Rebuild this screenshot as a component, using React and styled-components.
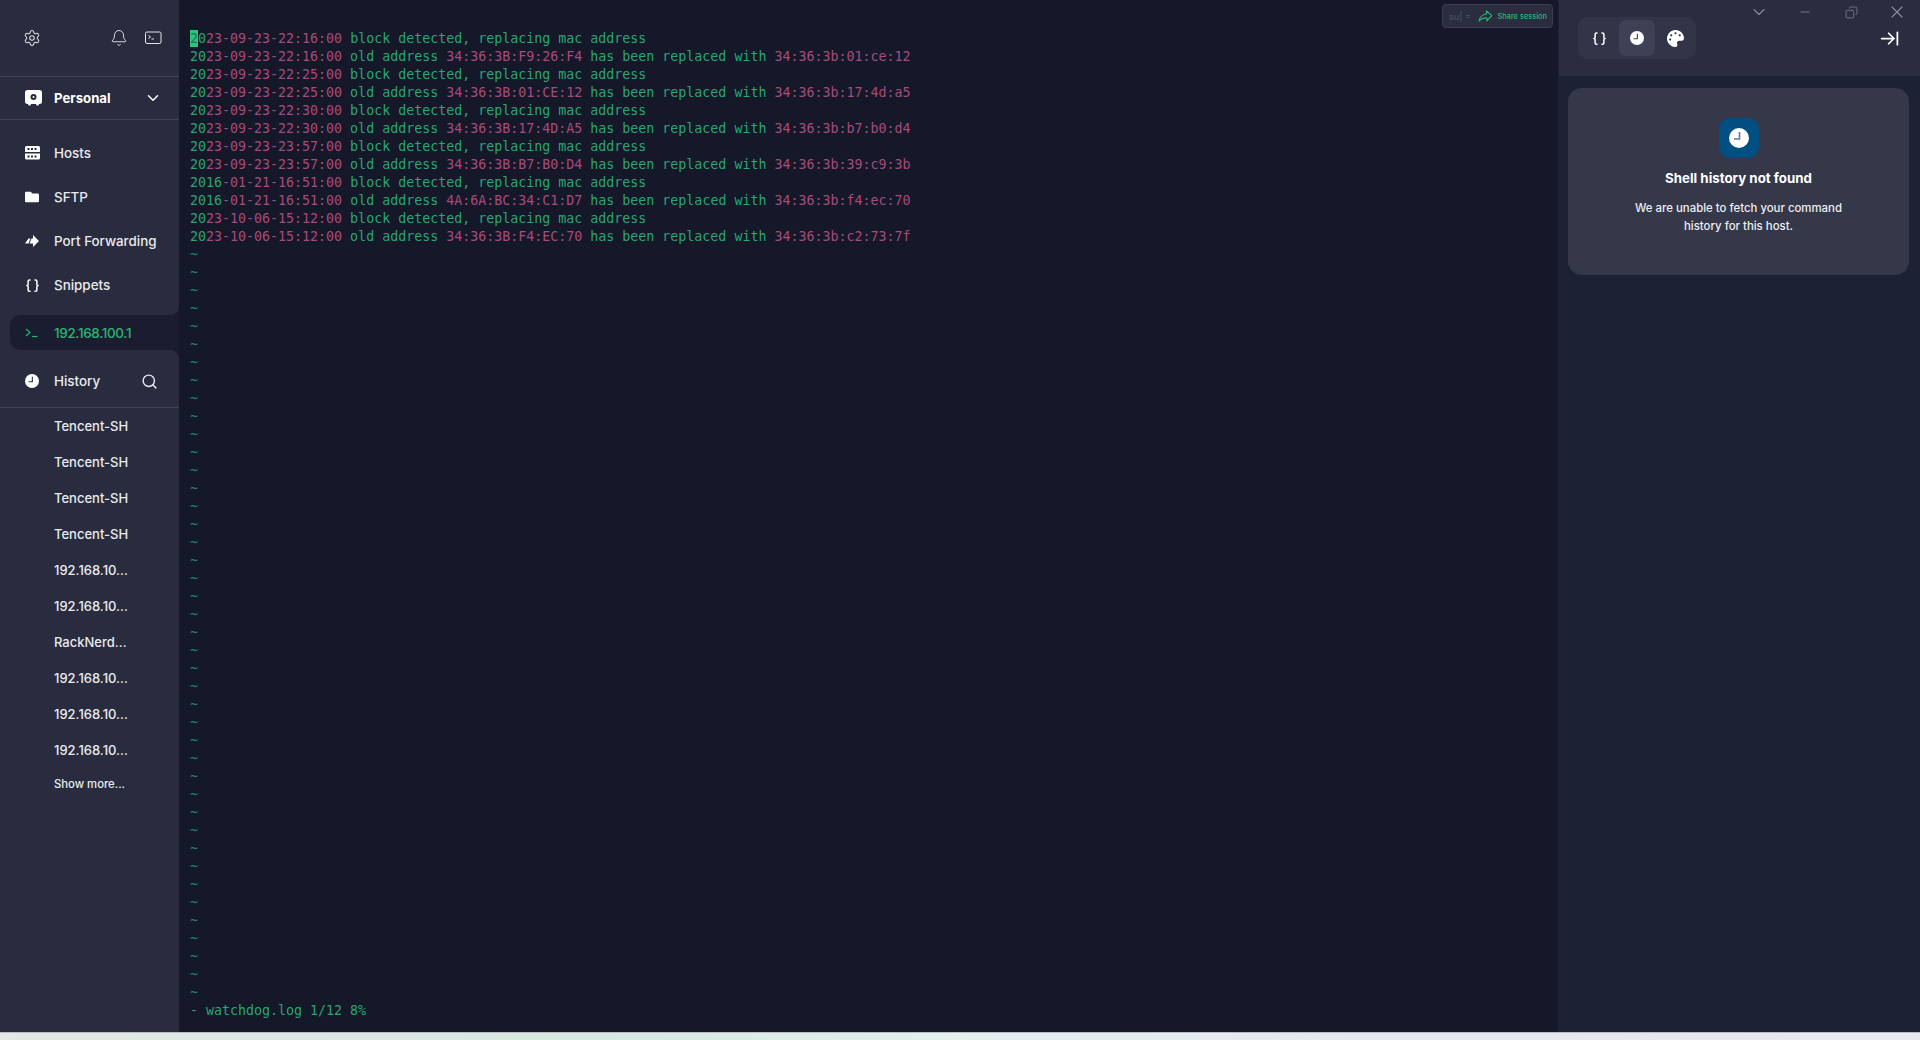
import React from 'react';
import styled, { createGlobalStyle } from 'styled-components';
import { Settings, Bell, ChevronDown, Search, Braces, Minus, X, Copy, ArrowRightToLine } from 'lucide-react';
import { FaFolder, FaPalette } from 'react-icons/fa';

const GlobalStyle = createGlobalStyle`
  html, body {
    margin: 0;
    padding: 0;
    height: 100%;
    background: #141828;
    overflow: hidden;
  }
  * { box-sizing: border-box; }
`;

const Page = styled.div`
  width: 1920px;
  height: 1040px;
  display: flex;
  flex-direction: column;
  font-family: Inter, "Liberation Sans", sans-serif;
`;

const Win = styled.div`
  flex: 1;
  min-height: 0;
  display: flex;
  position: relative;
`;

const DesktopStrip = styled.div`
  height: 8px;
  border-top: 1px solid #b9bcc2;
  background: linear-gradient(90deg, #e4e8e6 0%, #d6e8df 30%, #e3f0ee 50%, #e6e6ef 75%, #e9e9f2 100%);
`;

// Sidebar
const Sidebar = styled.aside`
  width: 179px;
  flex-shrink: 0;
  background: #292c3e;
  display: flex;
  flex-direction: column;
  color: #e9eaef;
`;

const TopBar = styled.div`
  height: 77px;
  padding: 0 17px 0 23px;
  display: flex;
  align-items: center;
  justify-content: space-between;
  border-bottom: 1px solid #3f4254;
  color: #d9dae1;
`;

const TopGroup = styled.div`
  display: flex;
  align-items: center;
  gap: 17px;
`;

const VaultRow = styled.div`
  height: 43px;
  padding: 0 17px 0 25px;
  display: flex;
  align-items: center;
  border-bottom: 1px solid #3f4254;
  font-size: 13.2px;
  font-weight: 700;
  color: #fff;
`;

const RowIcon = styled.span`
  width: 29px;
  flex-shrink: 0;
  display: flex;
  align-items: center;
`;

const VaultName = styled.span`
  flex: 1;
`;

const Nav = styled.nav`
  padding-top: 11px;
  display: flex;
  flex-direction: column;
`;

const NavItem = styled.div`
  height: 44px;
  padding-left: 25px;
  display: flex;
  align-items: center;
  font-size: 13.4px;
  font-weight: 500;
`;

const ActiveTab = styled.div`
  position: relative;
  height: 35px;
  margin: 8px 0 0 10px;
  padding-left: 15px;
  display: flex;
  align-items: center;
  background: #1a1d30;
  border-radius: 10px 0 0 10px;
  color: #2bb673;
  font-size: 13.4px;
  font-weight: 500;
  letter-spacing: -0.3px;

  &::before, &::after {
    content: '';
    position: absolute;
    right: 0;
    width: 9px;
    height: 9px;
  }
  &::before {
    top: -9px;
    background: radial-gradient(circle at 0 0, transparent 8.5px, #1a1d30 9px);
  }
  &::after {
    bottom: -9px;
    background: radial-gradient(circle at 0 100%, transparent 8.5px, #1a1d30 9px);
  }
`;

const HistoryHead = styled.div`
  height: 58px;
  padding: 5px 21px 0 25px;
  display: flex;
  align-items: center;
  border-bottom: 1px solid #3f4254;
  font-size: 13.4px;
  font-weight: 500;
`;

const HistoryTitle = styled.span`
  flex: 1;
`;

const HistoryList = styled.div`
  display: flex;
  flex-direction: column;
`;

const HistoryItem = styled.div`
  height: 36px;
  padding-left: 54px;
  display: flex;
  align-items: center;
  font-size: 13px;
  font-weight: 500;
`;

const ShowMore = styled.div`
  height: 32px;
  padding-left: 54px;
  display: flex;
  align-items: center;
  font-size: 11.3px;
  font-weight: 500;
`;

// Terminal
const Terminal = styled.main`
  flex: 1;
  min-width: 0;
  position: relative;
  background: #141828;
  padding: 30px 0 0 11px;
  font-family: "DejaVu Sans Mono", "Liberation Mono", monospace;
  font-size: 13.3px;
  line-height: 18px;
  color: #2aa574;
  white-space: pre;
`;

const Line = styled.div`
  height: 18px;
`;

const Pink = styled.span`
  color: #a84a7e;
`;

const Cursor = styled.span`
  display: inline-block;
  height: 17px;
  line-height: 17px;
  vertical-align: top;
  background: #2bc47d;
  color: #157a50;
`;

const Tilde = styled.div`
  height: 18px;
  color: #1f8277;
`;

const ShareBox = styled.div`
  position: absolute;
  top: 4px;
  right: 5px;
  width: 111px;
  height: 24px;
  padding: 1px 5px 0 6px;
  display: flex;
  align-items: center;
  background: #2a2d3f;
  border: 1px solid #3a3d4e;
  border-radius: 4px;
  font-family: Inter, "Liberation Sans", sans-serif;
  font-size: 7.4px;
  font-weight: 500;
  color: #2bb673;
`;

const ShareGhost = styled.span`
  color: #4b4e5f;
  font-size: 9px;
  width: 29px;
`;

const ShareLabel = styled.span`
  margin-left: 5px;
`;

// Right panel
const Panel = styled.section`
  width: 362px;
  flex-shrink: 0;
  display: flex;
  flex-direction: column;
  background: #1d2134;
  border-left: 1px solid #1f2233;
`;

const PanelHead = styled.div`
  height: 76px;
  padding: 0 20px 0 19px;
  display: flex;
  align-items: center;
  justify-content: space-between;
  background: #2a2d3f;
  color: #fff;
`;

const Tabs = styled.div`
  width: 118px;
  height: 42px;
  padding: 3px;
  display: flex;
  justify-content: space-between;
  background: #323547;
  border-radius: 10px;
`;

const Tab = styled.div`
  width: 36px;
  height: 36px;
  display: flex;
  align-items: center;
  justify-content: center;
  border-radius: 7px;
  background: ${({ $active }) => ($active ? '#3e4155' : 'transparent')};
`;

const Card = styled.div`
  margin: 12px 11px 0 9px;
  height: 187px;
  padding-top: 30px;
  display: flex;
  flex-direction: column;
  align-items: center;
  background: #353849;
  border-radius: 14px;
  color: #fff;
`;

const CardIcon = styled.div`
  width: 40px;
  height: 40px;
  display: flex;
  align-items: center;
  justify-content: center;
  background: #004e82;
  border-radius: 11px;
`;

const CardTitle = styled.h3`
  margin: 11px 0 0;
  font-size: 13.3px;
  line-height: 18px;
  font-weight: 700;
`;

const CardText = styled.p`
  margin: 12px 0 0;
  width: 230px;
  text-align: center;
  font-size: 11.4px;
  line-height: 18px;
  font-weight: 500;
  color: #eeeef2;
`;

const WinControls = styled.div`
  position: absolute;
  top: 0;
  right: 0;
  display: flex;
  color: #8a8d9e;
`;

const WinButton = styled.div`
  width: 46px;
  height: 24px;
  display: flex;
  align-items: center;
  justify-content: center;
`;

const ServerIcon = () => (
  <svg width="15" height="14" viewBox="0 0 15 14">
    <path fill="#fff" fillRule="evenodd" d="M1.5 0h12A1.5 1.5 0 0 1 15 1.5V6H0V1.5A1.5 1.5 0 0 1 1.5 0zM0 7.5h15V12a1.5 1.5 0 0 1-1.5 1.5h-12A1.5 1.5 0 0 1 0 12zM2.5 2v2h2V2zm3.5 0v2h2V2zm3.5 0v2h2V2zM2.5 9.5v2h2v-2zm3.5 0v2h2v-2zm3.5 0v2h2v-2z" />
  </svg>
);

const VaultIcon = () => (
  <svg width="17" height="16" viewBox="0 0 17 16">
    <path fill="#fff" d="M2.5 0h12A2.5 2.5 0 0 1 17 2.5v9a2.5 2.5 0 0 1-2.5 2.5H14l-.5 1.5h-2L11 14H6l-.5 1.5h-2L3 14h-.5A2.5 2.5 0 0 1 0 11.500v-9A2.500 2.500 0 0 1 2.500 0z" />
    <circle cx="8.500" cy="7" r="3" fill="#292c3e" />
    <circle cx="8.500" cy="7" r="1" fill="#fff" />
  </svg>
);

const ForwardIcon = () => (
  <svg width="14" height="12" viewBox="0 0 14 12">
    <path fill="#fff" d="M8 0l6 6-6 6V8.500H4.500L6.500 3.500H8zM3.500 3.500h2l-2 5H1.800L0 8.500z" />
  </svg>
);

const PromptIcon = () => (
  <svg width="13" height="10" viewBox="0 0 13 10" fill="none" stroke="#2bb673" strokeWidth="1.200">
    <path d="M1 1l4 3.500L1 8" />
    <path d="M7 8.500h5.500" />
  </svg>
);

const ConsoleIcon = () => (
  <svg width="17" height="14" viewBox="0 0 17 14" fill="none" stroke="#e4e5ea" strokeWidth="1">
    <rect x="0.500" y="1" width="15.500" height="11.500" rx="1.500" />
    <path d="M3.500 4.500l2 1.500-2 1.500M6.500 8h2.500" />
  </svg>
);

const ClockIcon = ({ size, hand }) => (
  <svg width={size} height={size} viewBox="0 0 20 20">
    <circle cx="10" cy="10" r="10" fill="#fff" />
    <path d="M10.500 4v7H5" fill="none" stroke={hand} strokeWidth="1.600" />
  </svg>
);

const ShareIcon = () => (
  <svg width="15" height="13" viewBox="0 0 15 13" fill="none" stroke="#2bb673" strokeWidth="1.200" strokeLinejoin="round">
    <path d="M8.500 1l5.500 4.500L9 11V8c-3-.3-5.500.5-8 3 .5-3.500 3.500-6.500 7.500-7z" />
  </svg>
);

const logLines = [
  ['2023-09-23-22:16:00', 'block'],
  ['2023-09-23-22:16:00', '34:36:3B:F9:26:F4', '34:36:3b:01:ce:12'],
  ['2023-09-23-22:25:00', 'block'],
  ['2023-09-23-22:25:00', '34:36:3B:01:CE:12', '34:36:3b:17:4d:a5'],
  ['2023-09-23-22:30:00', 'block'],
  ['2023-09-23-22:30:00', '34:36:3B:17:4D:A5', '34:36:3b:b7:b0:d4'],
  ['2023-09-23-23:57:00', 'block'],
  ['2023-09-23-23:57:00', '34:36:3B:B7:B0:D4', '34:36:3b:39:c9:3b'],
  ['2016-01-21-16:51:00', 'block'],
  ['2016-01-21-16:51:00', '4A:6A:BC:34:C1:D7', '34:36:3b:f4:ec:70'],
  ['2023-10-06-15:12:00', 'block'],
  ['2023-10-06-15:12:00', '34:36:3B:F4:EC:70', '34:36:3b:c2:73:7f'],
];

const hosts = [
  'Tencent-SH', 'Tencent-SH', 'Tencent-SH', 'Tencent-SH', '192.168.10...',
  '192.168.10...', 'RackNerd...', '192.168.10...', '192.168.10...', '192.168.10...',
];

const Stamp = ({ value, cursor }) => {
  // the highlighter leaves the century (or the whole 2016 year) in green
  const split = value.startsWith('2016') ? 4 : 2;
  return (
    <>
      {cursor ? <><Cursor>2</Cursor>{value.slice(1, split)}</> : value.slice(0, split)}
      <Pink>{value.slice(split)}</Pink>
    </>
  );
};

const App = () => (
  <Page>
    <GlobalStyle />
    <Win>
      <Sidebar>
        <TopBar>
          <Settings size={18} strokeWidth={1.4} />
          <TopGroup>
            <Bell size={18} strokeWidth={1.300} />
            <ConsoleIcon />
          </TopGroup>
        </TopBar>
        <VaultRow>
          <RowIcon><VaultIcon /></RowIcon>
          <VaultName>Personal</VaultName>
          <ChevronDown size={18} strokeWidth={2} />
        </VaultRow>
        <Nav>
          <NavItem><RowIcon><ServerIcon /></RowIcon>Hosts</NavItem>
          <NavItem><RowIcon><FaFolder size={14} color="#fff" /></RowIcon>SFTP</NavItem>
          <NavItem><RowIcon><ForwardIcon /></RowIcon>Port Forwarding</NavItem>
          <NavItem><RowIcon><Braces size={15} strokeWidth={2.4} color="#fff" /></RowIcon>Snippets</NavItem>
        </Nav>
        <ActiveTab>
          <RowIcon><PromptIcon /></RowIcon>192.168.100.1
        </ActiveTab>
        <HistoryHead>
          <RowIcon><ClockIcon size={14} hand="#292c3e" /></RowIcon>
          <HistoryTitle>History</HistoryTitle>
          <Search size={17} strokeWidth={2} />
        </HistoryHead>
        <HistoryList>
          {hosts.map((host, i) => (
            <HistoryItem key={i}>{host}</HistoryItem>
          ))}
          <ShowMore>Show more...</ShowMore>
        </HistoryList>
      </Sidebar>

      <Terminal>
        {logLines.map(([stamp, from, to], i) => (
          <Line key={i}>
            <Stamp value={stamp} cursor={i === 0} />
            {to
              ? <> old address <Pink>{from}</Pink> has been replaced with <Pink>{to}</Pink></>
              : ' block detected, replacing mac address'}
          </Line>
        ))}
        {Array.from({ length: 42 }, (_, i) => (
          <Tilde key={i}>~</Tilde>
        ))}
        <Line>- watchdog.log 1/12 8%</Line>
        <ShareBox>
          <ShareGhost>su| =</ShareGhost>
          <ShareIcon />
          <ShareLabel>Share session</ShareLabel>
        </ShareBox>
      </Terminal>

      <Panel>
        <PanelHead>
          <Tabs>
            <Tab><Braces size={15} strokeWidth={2.400} /></Tab>
            <Tab $active><ClockIcon size={14} hand="#3e4155" /></Tab>
            <Tab><FaPalette size={17} /></Tab>
          </Tabs>
          <ArrowRightToLine size={21} strokeWidth={2} />
        </PanelHead>
        <Card>
          <CardIcon><ClockIcon size={20} hand="#5b7a9c" /></CardIcon>
          <CardTitle>Shell history not found</CardTitle>
          <CardText>We are unable to fetch your command history for this host.</CardText>
        </Card>
      </Panel>

      <WinControls>
        <WinButton><ChevronDown size={20} strokeWidth={1.300} /></WinButton>
        <WinButton><Minus size={14} strokeWidth={1.300} /></WinButton>
        <WinButton><Copy size={13} strokeWidth={1.300} style={{ transform: 'scaleX(-1)' }} /></WinButton>
        <WinButton><X size={20} strokeWidth={1.300} /></WinButton>
      </WinControls>
    </Win>
    <DesktopStrip />
  </Page>
);

export default App;
